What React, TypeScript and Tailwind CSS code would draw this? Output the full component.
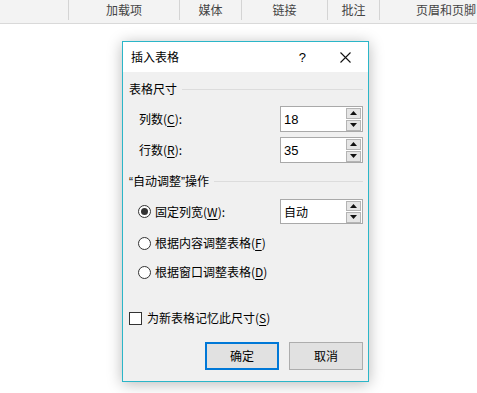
import React from 'react';

const font = { fontFamily: '"Noto Sans CJK SC", "Noto Sans", sans-serif' };
const latin = { fontFamily: '"Liberation Sans", sans-serif' };

function Tab({ label, width }: { label: string; width: string }) {
  return (
    <div className={`${width} h-[20px] flex items-center justify-center border-r border-[#d4d4d4] text-[12px] text-[#444]`}>
      {label}
    </div>
  );
}

function Arrows({ topH }: { topH: string }) {
  return (
    <div className="flex flex-col gap-[1px]">
      <div className={`w-[15px] ${topH} bg-[#e5e5e5] border border-[#b4b4b4] flex items-center justify-center`}>
        <svg width="7" height="4" viewBox="0 0 7 4"><path d="M3.5 0L7 4H0z" fill="#111" /></svg>
      </div>
      <div className="w-[15px] h-[11px] bg-[#e5e5e5] border border-[#b4b4b4] flex items-center justify-center">
        <svg width="7" height="4" viewBox="0 0 7 4"><path d="M0 0h7L3.5 4z" fill="#111" /></svg>
      </div>
    </div>
  );
}

function SpinBox({ value }: { value: string }) {
  return (
    <div className="w-[83px] h-[26px] border border-[#a9a9a9] bg-white flex items-center justify-between pl-[3px] pr-[1px]">
      <span className="text-[13px] leading-none text-black" style={latin}>{value}</span>
      <Arrows topH="h-[11px]" />
    </div>
  );
}

function Radio({ checked }: { checked?: boolean }) {
  return (
    <span className="w-[13px] h-[13px] rounded-full border border-[#333] bg-white flex items-center justify-center shrink-0">
      {checked && <span className="w-[7px] h-[7px] rounded-full bg-[#333]" />}
    </span>
  );
}

function Key({ k }: { k: string }) {
  return (
    <>
      (<span className="underline underline-offset-2">{k}</span>)
    </>
  );
}

export default function App() {
  return (
    <div className="relative w-[477px] h-[393px] bg-white overflow-hidden" style={font}>
      {/* ribbon strip */}
      <div className="h-[24px] bg-[#f3f3f3] border-b border-[#d9d9d9] flex items-start">
        <div className="w-[69px] h-[20px] border-r border-[#d4d4d4]" />
        <Tab label="加载项" width="w-[111px]" />
        <Tab label="媒体" width="w-[62px]" />
        <Tab label="链接" width="w-[86px]" />
        <Tab label="批注" width="w-[52px]" />
        <div className="flex-1 h-[20px] flex items-center pl-[36px] text-[12px] text-[#444] whitespace-nowrap">页眉和页脚</div>
      </div>

      {/* dialog */}
      <div className="absolute left-[122px] top-[41px] w-[247px] h-[341px] border border-[#2bb6c8] bg-[#f0f0f0] shadow-[0_2px_14px_rgba(0,0,0,0.28)] flex flex-col text-[12px] text-black">
        <div className="h-[30px] bg-white flex items-center shrink-0">
          <span className="pl-[8px] leading-none">插入表格</span>
          <span className="ml-auto mr-[34px] text-[13px] leading-none" style={latin}>?</span>
          <svg className="mr-[17px]" width="11" height="11" viewBox="0 0 11 11">
            <path d="M0.5 0.5L10.5 10.5M10.5 0.5L0.5 10.5" stroke="#111" strokeWidth="1.1" />
          </svg>
        </div>

        <div className="flex flex-col pl-[6px] pr-[5px]">
          <div className="mt-[9px] h-[16px] flex items-center gap-[5px]">
            <span className="leading-none">表格尺寸</span>
            <div className="flex-1 h-px bg-[#dcdcdc]" />
          </div>

          <div className="mt-[9px] h-[26px] flex items-center justify-between">
            <span className="pl-[10px] leading-none">列数<Key k="C" />:</span>
            <SpinBox value="18" />
          </div>
          <div className="mt-[5px] h-[26px] flex items-center justify-between">
            <span className="pl-[10px] leading-none">行数<Key k="R" />:</span>
            <SpinBox value="35" />
          </div>

          <div className="mt-[10px] h-[16px] flex items-center gap-[5px]">
            <span className="leading-none"><span style={latin}>“</span>自动调整<span style={latin}>”</span>操作</span>
            <div className="flex-1 h-px bg-[#dcdcdc]" />
          </div>

          <div className="mt-[10px] h-[25px] flex items-center justify-between">
            <div className="pl-[9px] flex items-center gap-[4px]">
              <Radio checked />
              <span className="leading-none">固定列宽<Key k="W" />:</span>
            </div>
            <div className="w-[83px] h-[25px] border border-[#a9a9a9] bg-white flex items-center justify-between pl-[3px] pr-[1px]">
              <span className="leading-none">自动</span>
              <Arrows topH="h-[10px]" />
            </div>
          </div>

          <div className="mt-[11px] h-[16px] pl-[9px] flex items-center gap-[4px]">
            <Radio />
            <span className="leading-none">根据内容调整表格<Key k="F" /></span>
          </div>
          <div className="mt-[13px] h-[16px] pl-[9px] flex items-center gap-[4px]">
            <Radio />
            <span className="leading-none">根据窗口调整表格<Key k="D" /></span>
          </div>

          <div className="mt-[30px] h-[16px] flex items-center gap-[5px]">
            <span className="w-[13px] h-[13px] border border-[#333] bg-white shrink-0" />
            <span className="leading-none">为新表格记忆此尺寸<Key k="S" /></span>
          </div>

          <div className="mt-[16px] flex justify-end gap-[10px]">
            <button className="w-[74px] h-[28px] bg-[#e1e1e1] border-2 border-[#0078d7] leading-none">确定</button>
            <button className="w-[74px] h-[28px] bg-[#e1e1e1] border border-[#adadad] leading-none">取消</button>
          </div>
        </div>
      </div>
    </div>
  );
}
